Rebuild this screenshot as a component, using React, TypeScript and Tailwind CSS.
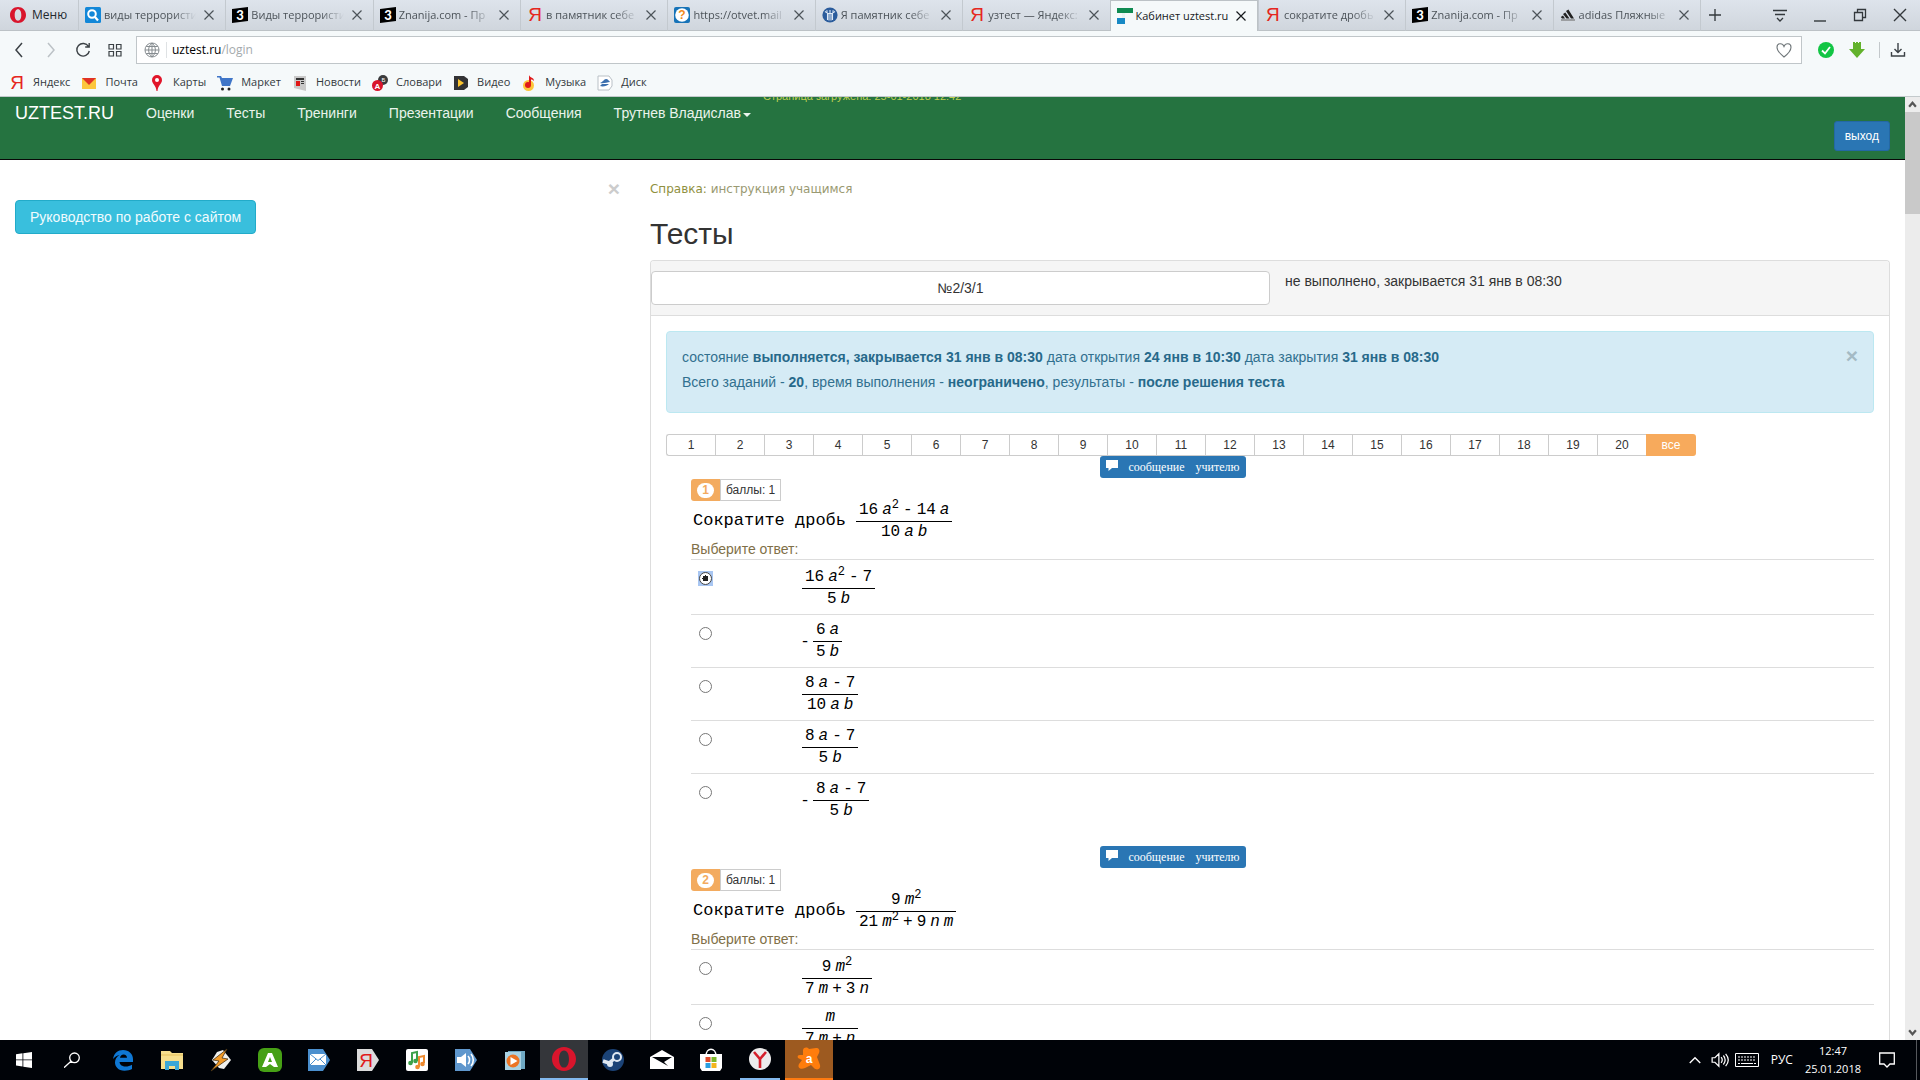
import React, { useState } from "react";

type Kids = { children?: React.ReactNode };

/* ---------- small brand icons ---------- */

const Ya = () => (
  <span className="w-4 text-center font-['Liberation_Sans'] text-[19px] leading-4 text-[#e52620]">Я</span>
);
const Three = () => (
  <svg viewBox="0 0 16 16" className="size-4">
    <path d="M0 2 16 0v14L0 16z" fill="#000" />
    <text x="8" y="12.5" fontSize="13" fontWeight="900" textAnchor="middle" fill="#fff" fontFamily="Lato">3</text>
  </svg>
);
const SearchFav = () => (
  <svg viewBox="0 0 16 16" className="size-4">
    <rect width="16" height="16" rx="1.5" fill="#1287d8" />
    <circle cx="7" cy="7" r="3.8" fill="none" stroke="#fff" strokeWidth="2" />
    <path d="m10 10 3 3.4" stroke="#fff" strokeWidth="2.2" />
  </svg>
);
const MailFav = () => (
  <svg viewBox="0 0 16 16" className="size-4">
    <rect width="16" height="16" rx="2" fill="#1673b8" />
    <circle cx="8" cy="8" r="6.8" fill="#fff" />
    <text x="8" y="12.2" fontSize="12" fontWeight="700" textAnchor="middle" fill="#f08a1d" fontFamily="Liberation Sans">?</text>
  </svg>
);
const StatueFav = () => (
  <svg viewBox="0 0 16 16" className="size-4">
    <circle cx="8" cy="8" r="7.6" fill="#2b5c9c" />
    <path d="M3 4.500 5.500 6v7M13 4.500 10.500 6v7M8 3v3M5.500 6.500h5M7 7v6.500M9 7v6.500M4.500 3.500l1 1M11.500 3.500l-1 1" fill="none" stroke="#dfe9f5" strokeWidth="1.1" />
  </svg>
);
const UzFav = () => (
  <svg viewBox="0 0 16 16" className="size-4">
    <path d="M0 0h16v5H0z" fill="#0f8b52" />
    <path d="M5 5h3v11H5z" fill="#e8f3f3" />
    <path d="M0 10h8v6H0z" fill="#1789c4" />
  </svg>
);
const Adidas = () => (
  <svg viewBox="0 0 16 16" className="size-4">
    <path d="m6 4 2.400-1.500L14 11.500h-3zM3 7l2.300-1.400L9.500 11.500h-3zM.8 10l2.200-1.400L5 11.500H2z" fill="#222" />
    <path d="M1 13h14" stroke="#777" strokeWidth="1.200" />
  </svg>
);
const OperaO = ({ cls }: { cls: string }) => (
  <svg viewBox="0 0 16 16" className={cls}>
    <path fillRule="evenodd" d="M8 0c4.500 0 8 3.500 8 8s-3.500 8-8 8-8-3.500-8-8 3.500-8 8-8zm0 2.300C5.800 2.300 4.700 4.800 4.700 8s1.100 5.700 3.300 5.700 3.300-2.500 3.300-5.700S10.200 2.300 8 2.300z" fill="#d9152c" />
  </svg>
);

const Stroke = ({ d, cls = "size-4", w = 1.3 }: { d: string; cls?: string; w?: number }) => (
  <svg viewBox="0 0 16 16" className={cls} fill="none" stroke="currentColor" strokeWidth={w}>
    <path d={d} />
  </svg>
);

/* ---------- browser chrome ---------- */

const tabs: { title: string; icon: React.ReactNode; active?: boolean }[] = [
  { title: "виды террористи", icon: <SearchFav /> },
  { title: "Виды террористи", icon: <Three /> },
  { title: "Znanija.com - Пр", icon: <Three /> },
  { title: "в памятник себе", icon: <Ya /> },
  { title: "https://otvet.mail", icon: <MailFav /> },
  { title: "Я памятник себе", icon: <StatueFav /> },
  { title: "узтест — Яндекс:", icon: <Ya /> },
  { title: "Кабинет uztest.ru", icon: <UzFav />, active: true },
  { title: "сократите дробь", icon: <Ya /> },
  { title: "Znanija.com - Пр", icon: <Three /> },
  { title: "adidas Пляжные", icon: <Adidas /> },
];

function TabStrip() {
  return (
    <div className="flex h-[31px] shrink-0 bg-linear-to-b from-[#dee4ec] to-[#cfd5dc] text-[11px] text-[#4c5359]">
      <button className="flex w-[78px] shrink-0 items-center gap-[6px] border-b border-[#bcc2c6] pl-[10px] text-[12px] text-[#22282c]">
        <OperaO cls="size-4" />
        Меню
      </button>
      {tabs.map((t, i) => (
        <div
          key={i}
          className={
            "flex min-w-0 flex-1 items-center gap-[3px] pl-[6px] pr-[10px] " +
            (t.active
              ? "border-x border-t border-[#bcc2c6] bg-[#f5f9fa] text-[#15191c]"
              : "border-b border-l border-b-[#bcc2c6] border-l-[#c3c9cf]")
          }
        >
          <span className="flex shrink-0">{t.icon}</span>
          <span
            className={
              "min-w-0 flex-1 whitespace-nowrap " +
              (t.active ? "" : "[mask-image:linear-gradient(to_right,black_75%,transparent)]")
            }
          >
            {t.title}
          </span>
          <button aria-label="Закрыть вкладку" className="ml-[4px] shrink-0">
            <Stroke cls="size-3" d="M2 2l12 12M14 2 2 14" w={1.6} />
          </button>
        </div>
      ))}
      <div className="flex w-[220px] shrink-0 items-center border-b border-l border-b-[#bcc2c6] border-l-[#c3c9cf] text-[#33383c]">
        <button aria-label="Новая вкладка" className="flex w-7 justify-center">
          <Stroke cls="size-3" d="M8 0v16M0 8h16" w={1.8} />
        </button>
        <div className="ml-auto flex">
          <button aria-label="Список вкладок" className="flex w-10 justify-center"><Stroke d="M1 3.500h14M3 7.500h10M5 11l3 3 3-3" /></button>
          <button aria-label="Свернуть" className="flex w-10 justify-center"><Stroke d="M2 14h12" w={1.4} /></button>
          <button aria-label="Развернуть" className="flex w-10 justify-center"><Stroke d="M2.500 5.500h8v8h-8zM5.500 5.500v-3h8v8h-3" /></button>
          <button aria-label="Закрыть" className="flex w-10 justify-center"><Stroke d="M2 2l12 12M14 2 2 14" w={1.4} /></button>
        </div>
      </div>
    </div>
  );
}

function AddressBar() {
  return (
    <div className="flex h-[38px] shrink-0 items-center bg-[#f5f9fa] text-[#3b4145]">
      <div className="flex w-[136px] shrink-0 items-center pl-[3px]">
        <button aria-label="Назад" className="flex w-8 justify-center"><Stroke d="M11 1 5 8l6 7" w={1.5} /></button>
        <button aria-label="Вперёд" className="flex w-8 justify-center text-[#bcc2c6]"><Stroke d="m5 1 6 7-6 7" w={1.5} /></button>
        <button aria-label="Обновить" className="flex w-8 justify-center"><Stroke d="M13.500 4.500A6.300 6.300 0 1 0 14.300 9M14.200 1v4h-4" w={1.4} /></button>
        <button aria-label="Экспресс-панель" className="flex w-8 justify-center"><Stroke d="M2 2.500h4.500v4.500H2zM9.500 2.500H14v4.500H9.500zM2 9.500h4.500V14H2zM9.500 9.500H14V14H9.500z" w={1.2} /></button>
      </div>
      <div className="flex h-7 flex-1 items-center border border-[#c0c6c9] bg-white">
        <span className="flex w-[30px] justify-center border-r border-[#dfe2e4] text-[#858b8f]">
          <Stroke d="M8 1a7 7 0 1 0 0 14A7 7 0 0 0 8 1zM8 1c-4.500 3.500-4.500 10.500 0 14M8 1c4.500 3.500 4.500 10.500 0 14M8 1v14M1 8h14M2.200 4.500h11.600M2.200 11.500h11.600" w={1} />
        </span>
        <a href="#login" className="flex-1 pl-[5px] text-black">
          uztest.ru<span className="text-[#a5aaad]">/login</span>
        </a>
        <button aria-label="В закладки" className="mr-[9px] text-[#6f7679]">
          <Stroke d="M8 15C3 11 1 8 1 5.200 1 1 6.500.5 8 4.500 9.500.5 15 1 15 5.200 15 8 13 11 8 15z" w={1.1} />
        </button>
      </div>
      <div className="flex w-[118px] shrink-0 items-center pl-[16px]">
        <svg viewBox="0 0 16 16" className="size-4"><circle cx="8" cy="8" r="8" fill="#12c544" /><path d="m4 8.500 3 3 5-6.500" fill="none" stroke="#fff" strokeWidth="1.800" /></svg>
        <svg viewBox="0 0 16 16" className="ml-[15px] size-4"><path d="M4 0h2v1h1V0h2v1h1V0h2v7h4l-8 9-8-9h4z" fill="#62b22c" /></svg>
        <span className="ml-[14px] h-4 w-px bg-[#c3c8cb]" />
        <button aria-label="Загрузки" className="ml-[10px]"><Stroke d="M8 1v9M4.500 7 8 10.500 11.500 7M1.500 10v4h13v-4" w={1.4} /></button>
      </div>
    </div>
  );
}

const bookmarks: [string, React.ReactNode][] = [
  ["Яндекс", <Ya />],
  ["Почта", <svg viewBox="0 0 16 16" className="size-4"><path d="M1 3h14v11H1z" fill="#fcc63c" /><path d="M1 3h14l-7 7z" fill="#e03226" /></svg>],
  ["Карты", <svg viewBox="0 0 16 16" className="size-4"><path d="M8 0a5 5 0 0 1 5 5c0 4-4 5-4.500 11h-1C7 10 3 9 3 5a5 5 0 0 1 5-5z" fill="#e1162a" /><circle cx="8" cy="5" r="2" fill="#fff" /></svg>],
  ["Маркет", <svg viewBox="0 0 16 16" className="size-4"><path d="M0 1h4l1 2h11l-3 8H5L2.500 2.500H0z" fill="#4076c8" /><circle cx="5.500" cy="14" r="1.500" fill="#222" /><circle cx="12" cy="14" r="1.500" fill="#222" /></svg>],
  ["Новости", <svg viewBox="0 0 16 16" className="size-4"><path d="M2 1h12v15L2 13z" fill="#c9c9c9" /><path d="M4 3h8v2H4zM9 6h3v1H9zM9 8h3v1H9z" fill="#333" /><path d="M4 6h4v5H4z" fill="#e01616" /></svg>],
  ["Словари", <svg viewBox="0 0 16 16" className="size-4"><circle cx="11" cy="5" r="5" fill="#3a3a3c" /><circle cx="5.500" cy="10.500" r="5.500" fill="#d9142b" /><text x="5.500" y="13.500" fontSize="8" fontWeight="700" textAnchor="middle" fill="#fff" fontFamily="Liberation Sans">A</text><text x="11.500" y="6.500" fontSize="6" textAnchor="middle" fill="#fff" fontFamily="Liberation Sans">Б</text></svg>],
  ["Видео", <svg viewBox="0 0 16 16" className="size-4"><path d="M1 1h10l4 3v8l-4 3H1z" fill="#333335" /><path d="m5 4 6 4-6 4z" fill="#fdc52e" /></svg>],
  ["Музыка", <svg viewBox="0 0 16 16" className="size-4"><circle cx="7.500" cy="10.500" r="5.500" fill="#fdc63a" /><circle cx="7" cy="10" r="3" fill="#e01a1a" /><path d="M8 0c1 3 5 2 5 6-1-1-3-2-3-1v5H8z" fill="#e01a1a" /></svg>],
  ["Диск", <svg viewBox="0 0 16 16" className="size-4"><path d="M1 1h11l3 4v6l-3 4H1z" fill="#fff" stroke="#b9c0c6" /><path d="M3 8c3-1 4-4 6-4 2 0 3 2 4 3-3 0-6 2-10 1zM3 11c3 1 7 0 9-2l-7 0z" fill="#3c6fae" /></svg>],
];

function BookmarkBar() {
  return (
    <div className="flex h-7 shrink-0 items-center gap-[11px] border-b border-[#c3cacc] bg-[#f5f9fa] pl-[9px] text-[11px] text-[#33393d]">
      {bookmarks.map(([label, icon]) => (
        <a key={label} href="#bookmark" className="flex items-center gap-2">
          {icon}
          {label}
        </a>
      ))}
    </div>
  );
}

/* ---------- page ---------- */

function SiteNav() {
  return (
    <nav className="relative flex h-[63px] shrink-0 items-start justify-between overflow-hidden border-b border-[#080808] bg-[#257340] px-[15px] text-[14px] leading-5 text-[#eaf4ec]">
      <div className="flex gap-8 pt-[6px]">
        <a href="#home" className="text-[18px] text-white">UZTEST.RU</a>
        <a href="#marks">Оценки</a>
        <a href="#tests">Тесты</a>
        <a href="#trainings">Тренинги</a>
        <a href="#slides">Презентации</a>
        <a href="#messages">Сообщения</a>
        <a href="#user" className="flex items-center gap-[2px]">
          Трутнев Владислав
          <span className="mt-1 border-x-4 border-t-4 border-x-transparent border-t-current" />
        </a>
      </div>
      <span className="absolute -top-[8px] left-[763px] text-[11px] leading-[14px] whitespace-nowrap text-[#bccf52]">
        Страница загружена: 25-01-2018 12:42
      </span>
      <button className="mt-6 h-[30px] rounded-[3px] border border-[#2468a4] bg-[#2a76b4] px-[10px] text-[12px] text-white">
        выход
      </button>
    </nav>
  );
}

/* Math primitives: numbers are upright, variables are italic. */
const V = ({ children }: Kids) => <i>{children}</i>;
const Sq = () => <sup className="text-[12px] leading-none">2</sup>;

const Row = ({ children }: Kids) => (
  <span className="flex h-[19px] items-baseline justify-center gap-1 px-[3px] leading-[19px]">{children}</span>
);

function Frac({ top, bottom, neg, short }: { top: React.ReactNode; bottom: React.ReactNode; neg?: boolean; short?: boolean }) {
  return (
    <span className="flex items-center font-['Liberation_Mono'] text-[16px] text-black">
      {neg && <span className="-ml-[2px] mr-[3px] w-[10px] text-center">-</span>}
      <span className={"flex flex-col " + (short ? "-mt-[3px]" : "")}>
        <Row>{top}</Row>
        <span className="my-px h-px bg-black" />
        <Row>{bottom}</Row>
      </span>
    </span>
  );
}

type Opt = { f: React.ReactNode; tall?: boolean };
type Question = { stem: React.ReactNode; options: Opt[] };

const questions: Question[] = [
  {
    stem: <Frac top={<><span>16</span><span><V>a</V><Sq /></span><span>-</span><span>14</span><V>a</V></>} bottom={<><span>10</span><V>a</V><V>b</V></>} />,
    options: [
      { tall: true, f: <Frac top={<><span>16</span><span><V>a</V><Sq /></span><span>-</span><span>7</span></>} bottom={<><span>5</span><V>b</V></>} /> },
      { f: <Frac neg top={<><span>6</span><V>a</V></>} bottom={<><span>5</span><V>b</V></>} /> },
      { f: <Frac top={<><span>8</span><V>a</V><span>-</span><span>7</span></>} bottom={<><span>10</span><V>a</V><V>b</V></>} /> },
      { f: <Frac top={<><span>8</span><V>a</V><span>-</span><span>7</span></>} bottom={<><span>5</span><V>b</V></>} /> },
      { f: <Frac neg top={<><span>8</span><V>a</V><span>-</span><span>7</span></>} bottom={<><span>5</span><V>b</V></>} /> },
    ],
  },
  {
    stem: <Frac top={<><span>9</span><span><V>m</V><Sq /></span></>} bottom={<><span>21</span><span><V>m</V><Sq /></span><span>+</span><span>9</span><V>n</V><V>m</V></>} />,
    options: [
      { tall: true, f: <Frac top={<><span>9</span><span><V>m</V><Sq /></span></>} bottom={<><span>7</span><V>m</V><span>+</span><span>3</span><V>n</V></>} /> },
      { f: <Frac short top={<V>m</V>} bottom={<><span>7</span><V>m</V><span>+</span><V>n</V></>} /> },
    ],
  },
];

function QuestionBlock({ q, n, first }: { q: Question; n: number; first?: boolean }) {
  const [picked, setPicked] = useState(first ? 0 : -1);
  return (
    <section className={"shrink-0 " + (first ? "" : "mt-5")}>
      <div className="flex max-w-[1014px] justify-center">
        <button className="flex h-[22px] items-center rounded-[3px] bg-[#2a76b4] px-[6px] font-['Liberation_Serif'] text-[12px] text-white">
          <svg viewBox="0 0 12 12" className="mr-[10px] mb-1 size-3"><path d="M0 1h12v8H6l-3.500 3V9H0z" fill="#fff" /></svg>
          <span className="mr-[11px]">сообщение</span>
          <span>учителю</span>
        </button>
      </div>
      <div className="ml-[25px]">
        <div className="mt-px flex h-[22px] text-[12px]">
          <span className="flex w-[29px] items-center justify-center rounded-l-[3px] bg-[#f3ab5f]">
            <span className="flex h-[15px] w-[17px] items-center justify-center rounded-full bg-white font-bold leading-none text-[#f3ab5f]">{n}</span>
          </span>
          <span className="flex items-center border border-[#ccc] px-[5px]">баллы: 1</span>
        </div>
        <div className="flex h-[40px] items-center">
          <span className="mr-[10px] pl-[2px] font-['Liberation_Mono'] text-[17px] text-black">Сократите дробь</span>
          {q.stem}
        </div>
        <fieldset>
          <legend className="h-[18px] leading-[16px] text-[#7f7048]">Выберите ответ:</legend>
          {q.options.map((o, i) => (
            <label key={i} className={"flex border-t border-[#ddd] " + (o.tall ? "h-[55px] pt-2" : "h-[53px] pt-[6px]")}>
              <span className={"ml-[7px] flex h-[15px] p-px has-checked:bg-[#a8c6f2] " + (o.tall ? "mt-[3px]" : "mt-[5px]")}>
                <input
                  type="radio"
                  name={"question-" + n}
                  checked={picked === i}
                  onChange={() => setPicked(i)}
                  className="size-[13px] appearance-none rounded-full border border-[#777] bg-white checked:border-[#444] checked:bg-[radial-gradient(circle,#222_0_3px,white_3px)]"
                />
              </span>
              <span className="ml-[89px] flex items-start">{o.f}</span>
            </label>
          ))}
        </fieldset>
      </div>
    </section>
  );
}

function Page() {
  return (
    <div className="flex min-h-0 flex-1">
      <div className="flex min-w-0 flex-1 flex-col overflow-hidden font-['Liberation_Sans',sans-serif] text-[14px] leading-5 text-[#333]">
        <SiteNav />
        <div className="flex min-h-0 flex-1">
          <aside className="w-1/3 px-[15px] pt-[18px]">
            <div className="flex justify-end">
              <button aria-label="Закрыть" className="h-[22px] text-[21px] font-bold leading-[22px] text-[#ccc]">×</button>
            </div>
            <button className="h-[34px] rounded-[4px] border border-[#22abc9] bg-[#39bfdd] px-[14px] text-[#f1fbfd]">
              Руководство по работе с сайтом
            </button>
          </aside>
          <main className="flex w-2/3 flex-col px-[15px] pt-[19px]">
            <p className="font-['DejaVu_Sans'] text-[12px] text-[#9a9a72]">
              <a href="#help" className="text-[#8f9040]">Справка:</a> инструкция учащимся
            </p>
            <h1 className="mt-[18px] mb-[9px] text-[30px] leading-[34px]">Тесты</h1>
            <div className="flex min-h-0 flex-1 flex-col overflow-hidden rounded-t-[4px] border border-b-0 border-[#ddd]">
              <div className="flex h-[55px] shrink-0 items-start border-b border-[#ddd] bg-[#f5f5f5] pt-[10px]">
                <button className="h-[34px] w-1/2 rounded-[4px] border border-[#ccc] bg-white">№2/3/1</button>
                <span className="pl-[15px]">не выполнено, закрывается 31 янв в 08:30</span>
              </div>
              <div className="flex min-h-0 flex-1 flex-col px-[15px] pt-[15px]">
                <div className="flex h-[82px] shrink-0 items-start justify-between rounded-[4px] border border-[#bce8f1] bg-[#d5ebf5] px-[15px] pt-[13px] leading-[25px] text-[#31708f]">
                  <p className="[&_b]:text-[#27698a]">
                    состояние <b>выполняется, закрывается 31 янв в 08:30</b> дата открытия <b>24 янв в 10:30</b> дата закрытия <b>31 янв в 08:30</b>
                    <br />
                    Всего заданий - <b>20</b>, время выполнения - <b>неограничено</b>, результаты - <b>после решения теста</b>
                  </p>
                  <button aria-label="Закрыть" className="text-[21px] font-bold leading-[22px] text-[#a4bac4]">×</button>
                </div>
                <div className="mt-[21px] flex shrink-0 text-[12px]">
                  {Array.from({ length: 20 }, (_, i) => (
                    <button key={i} className="h-[22px] w-[49px] border border-r-0 border-[#ccc] bg-white first:rounded-l-[3px]">
                      {i + 1}
                    </button>
                  ))}
                  <button className="h-[22px] w-[50px] rounded-r-[3px] bg-[#f7aa5c] text-white">все</button>
                </div>
                {questions.map((q, i) => (
                  <QuestionBlock key={i} q={q} n={i + 1} first={i === 0} />
                ))}
              </div>
            </div>
          </main>
        </div>
      </div>
      <div className="flex w-[15px] shrink-0 flex-col items-center bg-[#ececec] text-[#555]">
        <span className="flex h-[15px] items-center"><Stroke cls="size-[9px]" d="m2 12 6-7 6 7" w={4} /></span>
        <span className="h-[102px] w-full bg-[#c9c9c9]" />
        <span className="mt-auto flex h-[15px] items-center"><Stroke cls="size-[9px]" d="m2 4 6 7 6-7" w={4} /></span>
      </div>
    </div>
  );
}

/* ---------- taskbar ---------- */

const Svg = ({ children }: Kids) => <svg viewBox="0 0 24 24" className="size-6">{children}</svg>;
const arrowTile = "M1 1h15l7 11-7 11H1z";

const apps: { name: string; icon: React.ReactNode; cls?: string }[] = [
  { name: "Edge", icon: <Svg><path d="M2 11C3 5 7 2 12 2c6 0 10 4 10 9v3H8.500c.3 3 3 4.500 6 4.500 2.500 0 4.500-.7 6.500-1.800V21c-2 1-4.500 1.700-7.500 1.700C7 22.700 4 18.500 4 14.500c0-3 1.500-6 4.500-7.500C6 7.500 4 8.700 2 11zm7-1.200h7c0-2-1.300-3.300-3.400-3.300-2 0-3.300 1.300-3.600 3.300z" fill="#0f78d4" /></Svg> },
  { name: "Проводник", icon: <Svg><path d="M1 3h9l2 2h11v16H1z" fill="#f6de8d" /><path d="M1 7h22" stroke="#e3bf5c" /><path d="M5 13h14v9h-4v-4H9v4H5z" fill="#3aa7d8" /></Svg> },
  { name: "Winamp", icon: <Svg><path d="m8 4 6-2 8 10-7 9-5-1-7-8z" fill="#f1f1ee" /><path d="M18 1 4 12l6 1-8 10 17-12-6-1z" fill="#f39a26" stroke="#4a3618" strokeWidth=".8" /></Svg> },
  { name: "Amigo", icon: <Svg><rect width="24" height="24" rx="6" fill="#46a015" /><path fillRule="evenodd" d="M10 5h4l6 14h-4l-4-3-4 3H4zM12 9l-2 5h4z" fill="#fff" /></Svg> },
  { name: "Почта", icon: <Svg><path d={arrowTile} fill="#4a8fce" /><path d="M3 6h16v11H3z" fill="#fff" /><path d="m3 6 8 6.500L19 6M3 17l6-6M19 17l-6-6" fill="none" stroke="#4a8fce" /></Svg> },
  { name: "Яндекс", icon: <Svg><path d={arrowTile} fill="#dcdcdc" /><text x="10" y="19" fontSize="19" textAnchor="middle" fill="#e01b1b" fontFamily="Liberation Sans">Я</text></Svg> },
  { name: "Музыка", icon: <Svg><rect x="1" y="1" width="22" height="22" rx="2" fill="#fff" /><path d="M7 15V5l5-1v9" fill="none" stroke="#3ca14a" strokeWidth="2" /><circle cx="5.500" cy="15" r="2.300" fill="#3ca14a" /><circle cx="10.500" cy="13" r="2.300" fill="#3ca14a" /><path d="M14 19V9l5-1v7" fill="none" stroke="#ee8a2f" strokeWidth="2" /><circle cx="12.500" cy="19" r="2.300" fill="#ee8a2f" /><circle cx="17.500" cy="16" r="2.300" fill="#ee8a2f" /></Svg> },
  { name: "Звук", icon: <Svg><path d={arrowTile} fill="#5f97cd" /><path d="M3 9h4l5-4v14l-5-4H3z" fill="#fff" /><path d="M14 8c2 2 2 6 0 8M17 6c3 3 3 9 0 12" fill="none" stroke="#fff" strokeWidth="1.600" /></Svg> },
  { name: "Видео", icon: <Svg><path d="M5 3h17v18H5z" fill="#6fa9c4" /><path d="M2 4h16v18H2z" fill="#a9d2e3" /><circle cx="10" cy="13" r="6.500" fill="#ec7424" /><path d="m7.500 9 7 4-7 4z" fill="#fff" /></Svg> },
  { name: "Opera", icon: <OperaO cls="size-6" />, cls: "bg-[#34363a] border-b-2 border-[#83b9ee]" },
  { name: "Steam", icon: <Svg><circle cx="12" cy="12" r="11" fill="#1b4377" /><circle cx="16" cy="9" r="4" fill="none" stroke="#dfe8f2" strokeWidth="2" /><path d="m2 13 6 2 5-4" fill="none" stroke="#dfe8f2" strokeWidth="3.500" /><circle cx="9" cy="16" r="3" fill="#dfe8f2" /></Svg> },
  { name: "Почта Windows", icon: <Svg><path d="m0 9 12-7 12 7v12H0z" fill="#fff" /><path d="M2 9h20l-8 5 4 4L2 9z" fill="#000308" /></Svg> },
  { name: "Магазин", icon: <Svg><path d="M7 8c0-9 10-9 10 0" fill="none" stroke="#fff" strokeWidth="1.500" /><path d="M1 6h22v14l-2 3H3l-2-3z" fill="#fff" /><path d="M6.500 9h5v5h-5z" fill="#e04a2b" /><path d="M12.500 9h5v5h-5z" fill="#7cb82b" /><path d="M6.500 15h5v5h-5z" fill="#2a9fe0" /><path d="M12.500 15h5v5h-5z" fill="#f4b51e" /></Svg> },
  { name: "Яндекс.Браузер", icon: <Svg><circle cx="12" cy="12" r="11" fill="#ececec" /><path d="m6 5 6 7 6-7M12 12v9" fill="none" stroke="#d5202b" strokeWidth="2.600" /></Svg>, cls: "border-b-2 border-[#83b9ee] mx-1" },
  { name: "Avast", icon: <Svg><path d="M6 3c1-3 4-3 6-1l7-1c3 0 4 2 3 5l-2 4 3 8c1 4-3 6-6 3l-3-3-6 3c-4 2-8 0-6-4l3-4-4-2c-1-2 0-3 2-3h3z" fill="#ff7d0c" /><text x="12" y="15.500" fontSize="12" fontWeight="700" textAnchor="middle" fill="#fff" fontFamily="Liberation Sans">a</text></Svg>, cls: "bg-[#9d5a20] border-b-2 border-[#ff7a10]" },
];

function Taskbar() {
  return (
    <div className="flex h-10 shrink-0 items-center bg-[#000308] font-['Open_Sans',sans-serif] text-[12px] leading-[18px] text-white">
      <button aria-label="Пуск" className="flex w-12 justify-center">
        <svg viewBox="0 0 16 16" className="size-4"><path d="m0 2.200 6.500-.9v6.200H0zM7.300 1.200 16 0v7.500H7.300zM0 8.300h6.500v6.200L0 13.600zM7.300 8.300H16V16l-8.700-1.200z" fill="#fff" /></svg>
      </button>
      <button aria-label="Поиск" className="mr-[3px] flex w-12 justify-center">
        <Stroke d="M10.500 1a4.800 4.800 0 1 0 0 9.600 4.800 4.800 0 0 0 0-9.600zM7 9.300 0 15.700" w={1.3} />
      </button>
      <div className="flex h-full gap-px">
        {apps.map((a) => (
          <div key={a.name} className="flex w-12">
            <button aria-label={a.name} className={"flex flex-1 items-center justify-center " + (a.cls ?? "")}>{a.icon}</button>
          </div>
        ))}
      </div>
      <div className="ml-auto flex h-full items-center">
        <button aria-label="Скрытые значки" className="mr-[10px]"><Stroke cls="size-3" d="m1 12 7-7 7 7" w={1.8} /></button>
        <button aria-label="Громкость" className="mr-[6px]"><Stroke cls="size-[18px]" d="M1 6h2.500L7 2.500v11L3.500 10H1zM9 5.500c1.200 1.500 1.200 3.500 0 5M11 4c2 2.500 2 5.500 0 8M13 2.500c3 3.500 3 7.500 0 11" w={1.1} /></button>
        <button aria-label="Клавиатура" className="mr-[12px]">
          <svg viewBox="0 0 24 14" className="h-[14px] w-6" fill="none" stroke="#fff"><path d="M.5.500h23v13H.5z" /><path d="M3 4h18M3 7h18" strokeDasharray="2 1" /><path d="M3 10.500h2m1 0h12m1 0h2" /></svg>
        </button>
        <button className="mr-[12px]">РУС</button>
        <div className="mr-[18px] text-center text-[11px]">12:47<br />25.01.2018</div>
        <button aria-label="Уведомления" className="mr-[21px]"><Stroke d="M.7 1h14.600v11H11l-3 3-3-3H.7z" w={1.3} /></button>
        <span className="mr-[3px] h-full w-px bg-[#55585c]" />
      </div>
    </div>
  );
}

export default function App() {
  return (
    <div className="flex h-screen flex-col overflow-hidden bg-white font-['Open_Sans',sans-serif] text-[12px]">
      <TabStrip />
      <AddressBar />
      <BookmarkBar />
      <Page />
      <Taskbar />
    </div>
  );
}
